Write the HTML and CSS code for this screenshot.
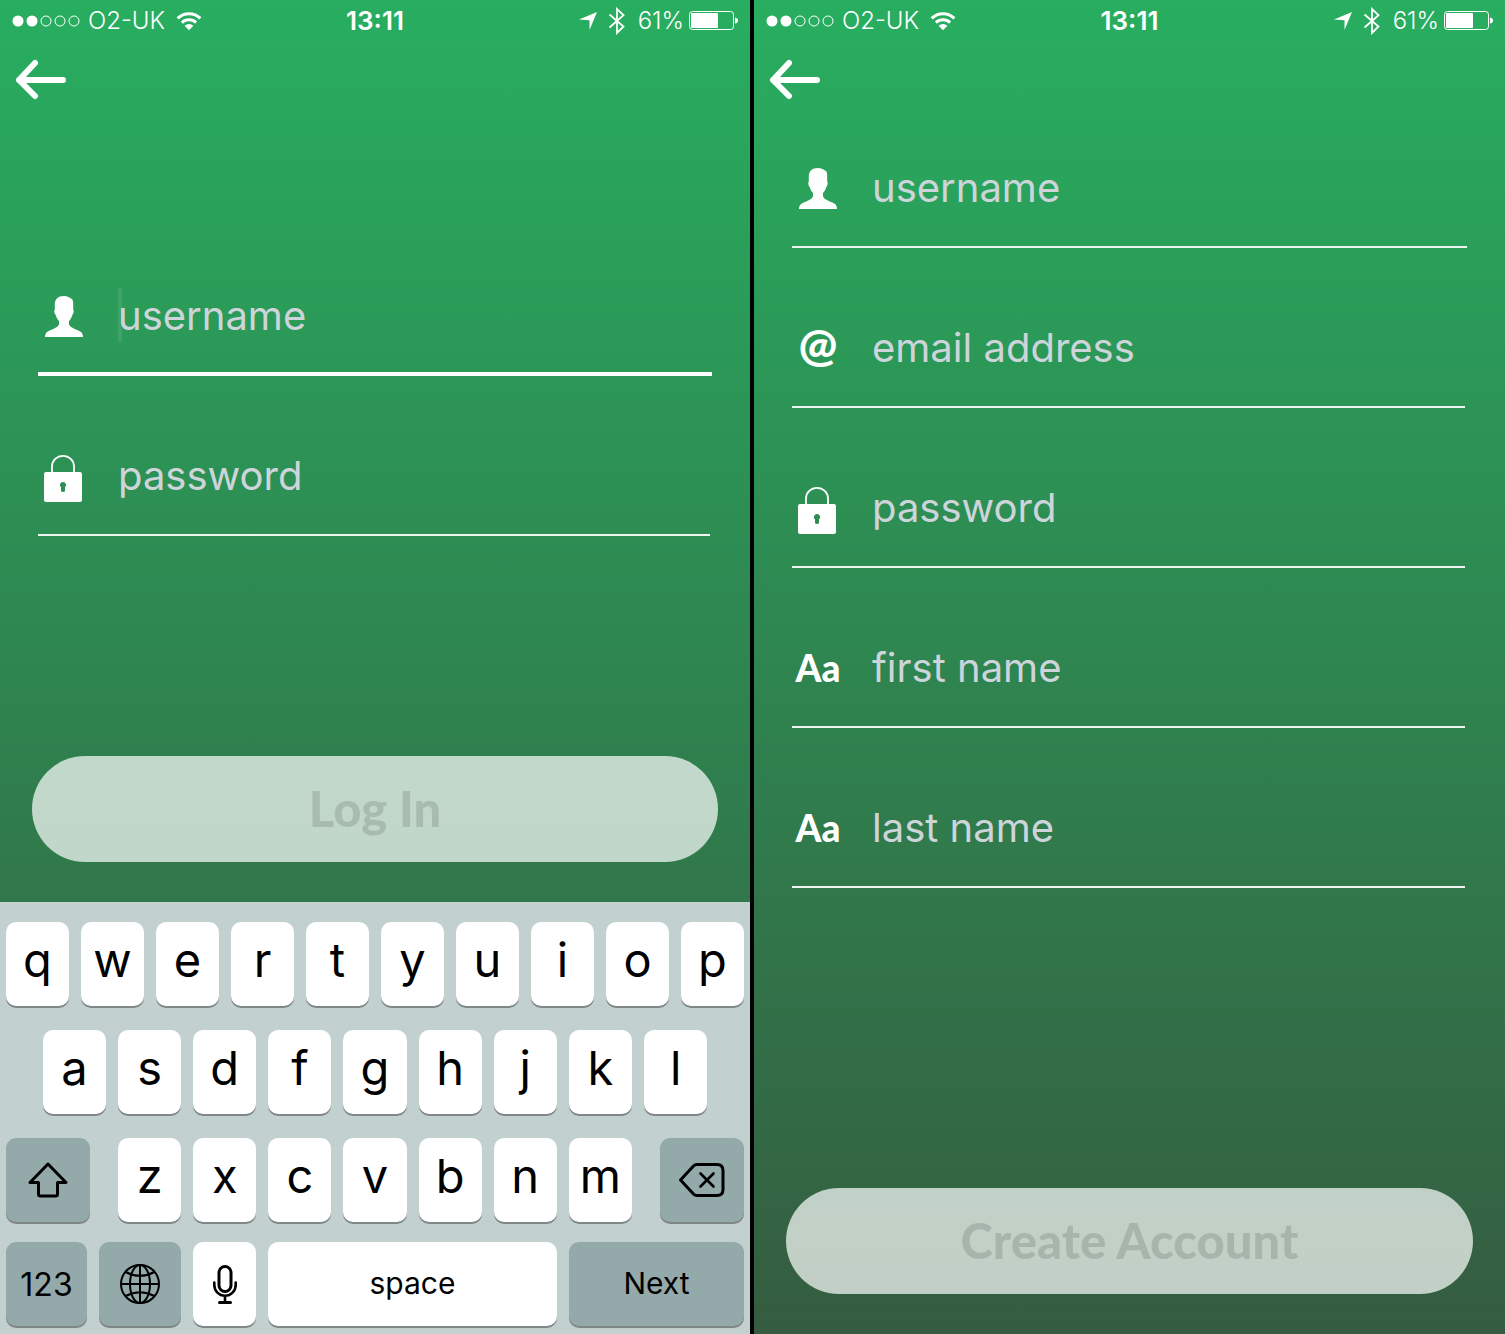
FILE: index.html
```html
<!DOCTYPE html>
<html lang="en">
<head>
<meta charset="utf-8">
<meta name="viewport" content="width=device-width, initial-scale=1">
<title>Log in and create account</title>
<link rel="stylesheet" href="styles.css">
</head>
<body>
<svg class="sprite" aria-hidden="true">
  <symbol id="dots" viewBox="0 0 70 14">
    <g fill="#fff"><circle cx="7" cy="7" r="5.5"/><circle cx="21" cy="7" r="5.5"/></g>
    <g fill="none" stroke="#fff"><circle cx="35" cy="7" r="5"/><circle cx="49" cy="7" r="5"/><circle cx="63" cy="7" r="5"/></g>
  </symbol>
  <symbol id="wifi" viewBox="0 0 26 20">
    <g fill="none" stroke="#fff" stroke-width="3">
      <path d="M1.6 7.4a16.2 16.2 0 0 1 22.8 0"/>
      <path d="M5.9 11.6a10.2 10.2 0 0 1 14.2 0"/>
    </g>
    <path fill="#fff" d="M13 19.2l-4.4-4.4a6.3 6.3 0 0 1 8.800 0z"/>
  </symbol>
  <symbol id="location" viewBox="0 0 18 18"><path fill="#fff" d="M18 0L10.500 18V8.200L0 7.500z"/></symbol>
  <symbol id="bluetooth" viewBox="0 0 18 28"><path fill="none" stroke="#fff" stroke-width="1.800" d="M1.500 7.500L15.500 19.500L9 26V2L15.500 8.200L1.500 20.500"/></symbol>
  <symbol id="battery" viewBox="0 0 50 20">
    <rect x=".5" y=".5" width="44" height="18" rx="3" fill="none" stroke="#fff"/>
    <rect x="2" y="2" width="27" height="15" rx="1" fill="#fff"/>
    <path fill="#fff" d="M46 6.500q3 .5 3 3t-3 3z"/>
  </symbol>
  <symbol id="arrow" viewBox="0 0 52 42"><path fill="none" stroke="#fff" stroke-width="6" stroke-linecap="round" stroke-linejoin="round" d="M20 4L4 21L20 37M4 21H48"/></symbol>
  <symbol id="user" viewBox="0 0 52 64"><path fill="#fff" d="M26 10C29.500 10 32 11.500 33 12.600C35 13.200 35.500 16 35.200 20V23.500C36.300 24.500 35.500 28 34.300 29C33.500 32 32.500 33.500 31 35V38.500C32.500 41.500 36 42.500 39 44C43 45.500 45 47 45 51H7C7 47 9 45.500 13 44C16 42.500 19.500 41.500 21 38.500V35C19.500 33.500 18.500 32 17.700 29C16.500 28 15.700 24.500 16.800 23.500V19C16.800 13 20 10 26 10z"/></symbol>
  <symbol id="lock" viewBox="0 0 52 64">
    <path fill="none" stroke="#fff" stroke-width="1.800" d="M14 27v-6.500a11 10.700 0 0 1 22 0V27"/>
    <path fill="#fff" fill-rule="evenodd" d="M8 26h34a2 2 0 0 1 2 2v26a2 2 0 0 1-2 2H8a2 2 0 0 1-2-2V28a2 2 0 0 1 2-2zM25 36a3 3 0 0 0-2 5.300V44.500a2 1.500 0 0 0 4 0V41.300A3 3 0 0 0 25 36z"/>
  </symbol>
</svg>

<main class="screens">
  <section class="phone" aria-label="Log in">
    <header class="status">
      <div class="status-side">
        <svg class="dots"><use href="#dots"/></svg>
        <span>O2-UK</span>
        <svg class="wifi"><use href="#wifi"/></svg>
      </div>
      <time class="clock">13:11</time>
      <div class="status-side status-right">
        <svg class="location"><use href="#location"/></svg>
        <svg class="bluetooth"><use href="#bluetooth"/></svg>
        <span>61%</span>
        <svg class="battery"><use href="#battery"/></svg>
      </div>
    </header>
    <a class="back" href="#back" aria-label="Back"><svg><use href="#arrow"/></svg></a>
    <form class="form form-login">
      <div class="fields">
        <div class="field field-active">
          <label for="login-user" aria-label="Username"><svg class="icon"><use href="#user"/></svg></label>
          <div class="entry"><input id="login-user" type="text" placeholder="username"><span class="caret"></span></div>
        </div>
        <div class="field">
          <label for="login-pass" aria-label="Password"><svg class="icon"><use href="#lock"/></svg></label>
          <div class="entry"><input id="login-pass" type="password" placeholder="password"></div>
        </div>
      </div>
      <button class="submit" type="submit">Log In</button>
    </form>
    <div class="keyboard">
      <div class="row">
        <button class="key">q</button><button class="key">w</button><button class="key">e</button><button class="key">r</button><button class="key">t</button><button class="key">y</button><button class="key">u</button><button class="key">i</button><button class="key">o</button><button class="key">p</button>
      </div>
      <div class="row row-inset">
        <button class="key">a</button><button class="key">s</button><button class="key">d</button><button class="key">f</button><button class="key">g</button><button class="key">h</button><button class="key">j</button><button class="key">k</button><button class="key">l</button>
      </div>
      <div class="row row-shift">
        <button class="key key-dark" aria-label="Shift"><svg viewBox="0 0 42 38" width="42" height="38"><path fill="none" stroke="#000" stroke-width="3" stroke-linejoin="round" d="M21 3L39 21.500H30.500V33q0 2-2 2H13.500q-2 0-2-2V21.500H3z"/></svg></button>
        <div class="letters">
          <button class="key">z</button><button class="key">x</button><button class="key">c</button><button class="key">v</button><button class="key">b</button><button class="key">n</button><button class="key">m</button>
        </div>
        <button class="key key-dark" aria-label="Delete"><svg viewBox="0 0 48 36" width="48" height="36"><g fill="none" stroke="#000" stroke-width="3" stroke-linecap="round" stroke-linejoin="round"><path d="M19 2.500H39q6 0 6 6V27.500q0 6-6 6H19q-2 0-3.500-1.500L2.500 18L15.500 4Q17 2.500 19 2.500z"/><path stroke-width="2.600" d="M22.500 11.500L35.500 24.500M35.500 11.500L22.500 24.500"/></g></svg></button>
      </div>
      <div class="row row-bottom">
        <button class="key key-dark key-digits">123</button>
        <button class="key key-dark" aria-label="Next keyboard"><svg viewBox="0 0 42 42" width="42" height="42"><g fill="none" stroke="#000" stroke-width="2"><circle cx="21" cy="21" r="19"/><ellipse cx="21" cy="21" rx="10" ry="19"/><path d="M21 2V40M2 21H40M6.500 9q14.500 7.500 29 0M6.500 33q14.500-7.500 29 0"/></g></svg></button>
        <button class="key" aria-label="Dictate"><svg viewBox="0 0 26 42" width="26" height="42"><g fill="none" stroke="#000" stroke-width="3" stroke-linecap="round"><rect x="7" y="3.500" width="12" height="25" rx="6"/><path stroke-width="2.600" d="M2.300 19.500v2.500a10.700 10.700 0 0 0 21.400 0v-2.500M13 33v6"/><path d="M7.500 39.500H18.500"/></g></svg></button>
        <button class="key key-word">space</button>
        <button class="key key-dark key-word">Next</button>
      </div>
    </div>
  </section>

  <section class="phone" aria-label="Create account">
    <header class="status">
      <div class="status-side">
        <svg class="dots"><use href="#dots"/></svg>
        <span>O2-UK</span>
        <svg class="wifi"><use href="#wifi"/></svg>
      </div>
      <time class="clock">13:11</time>
      <div class="status-side status-right">
        <svg class="location"><use href="#location"/></svg>
        <svg class="bluetooth"><use href="#bluetooth"/></svg>
        <span>61%</span>
        <svg class="battery"><use href="#battery"/></svg>
      </div>
    </header>
    <a class="back" href="#back" aria-label="Back"><svg><use href="#arrow"/></svg></a>
    <form class="form">
      <div class="fields">
        <div class="field field-first">
          <label for="new-user" aria-label="Username"><svg class="icon"><use href="#user"/></svg></label>
          <div class="entry"><input id="new-user" type="text" placeholder="username"></div>
        </div>
        <div class="field">
          <label for="new-email" class="icon icon-at">@</label>
          <div class="entry"><input id="new-email" type="email" placeholder="email address"></div>
        </div>
        <div class="field">
          <label for="new-pass" aria-label="Password"><svg class="icon"><use href="#lock"/></svg></label>
          <div class="entry"><input id="new-pass" type="password" placeholder="password"></div>
        </div>
        <div class="field">
          <label for="new-first" class="icon icon-text">Aa</label>
          <div class="entry"><input id="new-first" type="text" placeholder="first name"></div>
        </div>
        <div class="field">
          <label for="new-last" class="icon icon-text">Aa</label>
          <div class="entry"><input id="new-last" type="text" placeholder="last name"></div>
        </div>
      </div>
      <button class="submit" type="submit">Create Account</button>
    </form>
  </section>
</main>
</body>
</html>
```
FILE: styles.css
```css
* {
  box-sizing: border-box;
}

body {
  margin: 0;
  background: #000;
  font-family: Inter, "Liberation Sans", sans-serif;
  color: #fff;
}

svg {
  display: block;
  flex: none;
}

button,
input {
  font: inherit;
  margin: 0;
  padding: 0;
  border: 0;
}

.sprite {
  position: absolute;
  width: 0;
  height: 0;
}

.screens {
  display: grid;
  grid-template-columns: 750fr 751fr;
  gap: 4px;
  min-height: 100vh;
}

.phone {
  display: flex;
  flex-direction: column;
  min-width: 0;
  background: linear-gradient(#28ae60, #355c40);
}

/* Status bar */
.status {
  display: grid;
  grid-template-columns: 1fr auto 1fr;
  align-items: center;
  height: 42px;
  padding: 0 11px;
  font-size: 24px;
  line-height: 42px;
}

.status-side {
  display: flex;
  align-items: center;
  font-weight: 300;
}

.status-right {
  justify-content: flex-end;
}

.clock {
  font-size: 26px;
  font-weight: 600;
}

.dots {
  width: 70px;
  height: 14px;
  margin-right: 7px;
}

.wifi {
  width: 26px;
  height: 20px;
  margin-left: 11px;
}

.location {
  width: 18px;
  height: 18px;
  margin-right: 11px;
}

.bluetooth {
  width: 18px;
  height: 28px;
  margin-right: 12px;
}

.battery {
  width: 50px;
  height: 20px;
  margin-left: 5px;
}

.back {
  align-self: flex-start;
  margin: 17px 0 0 15px;
}

.back svg {
  width: 52px;
  height: 42px;
}

/* Forms */
.form {
  flex: 1;
  display: flex;
  flex-direction: column;
  justify-content: space-between;
  gap: 40px;
  padding: 57px 32px 40px;
}

.form-login {
  padding-top: 185px;
}

.fields {
  display: flex;
  flex-direction: column;
  gap: 70px;
  padding: 0 8px 0 6px;
}

.field {
  display: flex;
  gap: 28px;
  padding-bottom: 24px;
  border-bottom: 2px solid #eef5f0;
}

.field-first,
.field-active {
  margin-right: -2px;
}

.field-active {
  padding-bottom: 22px;
  border-bottom: 4px solid #fff;
}

.icon {
  width: 52px;
  height: 64px;
  flex: none;
  font-family: Lato, "Open Sans", sans-serif;
  font-weight: 900;
  text-align: center;
}

.icon-at {
  font-size: 46px;
  line-height: 52px;
}

.icon-text {
  font-size: 37px;
  line-height: 60px;
}

.entry {
  position: relative;
  flex: 1;
  min-width: 0;
}

.entry input {
  display: block;
  width: 100%;
  height: 58px;
  background: none;
  color: #fff;
  font-size: 40px;
  font-weight: 400;
}

.entry input::placeholder {
  color: #cdd5da;
  opacity: 1;
}

.caret {
  position: absolute;
  top: 2px;
  left: 0;
  width: 4px;
  height: 54px;
  border-radius: 2px;
  background: rgba(255, 255, 255, 0.09);
}

.submit {
  height: 106px;
  padding-bottom: 2px;
  border-radius: 53px;
  background: rgba(255, 255, 255, 0.7);
  color: rgba(0, 0, 0, 0.13);
  font-family: Lato, "Open Sans", sans-serif;
  font-size: 49px;
  font-weight: 900;
}

/* Keyboard */
.keyboard {
  display: flex;
  flex-direction: column;
  gap: 24px;
  padding: 20px 6px 8px;
  background: #c3d0d0;
}

.row,
.letters {
  display: flex;
  gap: 12px;
}

.row-inset {
  padding: 0 5%;
}

.row-shift {
  display: grid;
  grid-template-columns: 84fr 513fr 84fr;
  gap: 28px;
}

.row-bottom {
  display: grid;
  grid-template-columns: 81fr 82fr 63fr 289fr 175fr;
  margin-top: -4px;
}

.key {
  display: flex;
  flex: 1;
  align-items: center;
  justify-content: center;
  min-width: 0;
  height: 84px;
  padding-bottom: 10px;
  border-radius: 10px;
  background: #fff;
  box-shadow: 0 2px 0 #7f8787;
  color: #000;
  font-size: 47px;
  font-weight: 400;
}

.key:has(svg) {
  padding: 0;
}

.key-dark {
  background: #93a9aa;
}

.key-digits {
  padding: 0;
  font-size: 32px;
}

.key-word {
  padding-bottom: 2px;
  font-size: 30px;
}
```
